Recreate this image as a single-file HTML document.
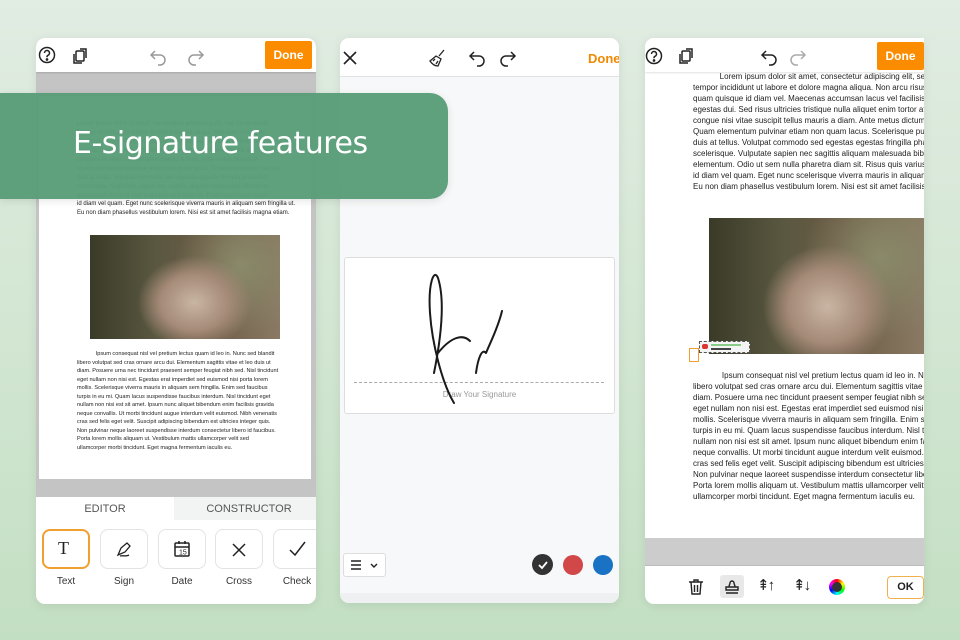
<!DOCTYPE html>
<html><head><meta charset="utf-8"><style>
*{margin:0;padding:0;box-sizing:border-box}
body{width:960px;height:640px;overflow:hidden;position:relative;font-family:"Liberation Sans",sans-serif;background:linear-gradient(180deg,#e1ece2 0%,#d3e6d3 50%,#c3dfc3 100%)}
.ph{position:absolute;background:#fff;border-radius:9px;overflow:hidden;box-shadow:0 2px 10px rgba(0,0,0,.08)}
.abs{position:absolute}
.t{position:absolute;white-space:nowrap;color:#222;font-family:"Liberation Sans",sans-serif}
.photo{position:absolute;overflow:hidden;background:radial-gradient(ellipse 30% 45% at 55% 65%,#c9b5a3 0%,#a58a78 60%,transparent 100%),radial-gradient(circle at 80% 30%,#8a8a6a 0%,transparent 40%),linear-gradient(90deg,#3a3a28 0%,#5a5840 35%,#6a5a45 60%,#8a7a64 100%)}
.done{position:absolute;background:#fb8c00;color:#fff;font-weight:bold;font-size:12px;text-align:center;border-radius:2px}
.tool{position:absolute;top:529px;width:48px;height:40px;border:1px solid #e3e3e3;border-radius:8px;background:#fff}
.lbl{position:absolute;top:576px;font-size:10px;color:#333;width:50px;text-align:center}
</style></head><body>

<!-- PANEL 1 -->
<div class="ph" style="left:36px;top:38px;width:280px;height:566px;background:#c4c4c4">
  <div class="abs" style="left:0;top:0;width:280px;height:34px;background:#fff;box-shadow:0 1px 2px rgba(0,0,0,.15)"></div>
  <svg class="abs" style="left:2px;top:8px" width="120" height="20" viewBox="0 0 120 20" fill="none" stroke="#222" stroke-width="1.5">
    <circle cx="9" cy="9" r="7.5"/><path d="M6.5 7a2.5 2.5 0 1 1 3.5 2.3c-.7.3-1 .8-1 1.5v.5" /><circle cx="9" cy="13.5" r=".6" fill="#222"/>
    <rect x="38" y="5" width="8" height="10" rx="1"/><path d="M36 8v9h8M42 3h6v9"/>
  </svg>
  <svg class="abs" style="left:112px;top:8px" width="60" height="20" viewBox="0 0 60 20" fill="none" stroke="#999" stroke-width="1.5">
    <path d="M7 5L3 9l4 4M3 9h9a5 5 0 0 1 0 10h-2"/><path d="M51 5l4 4-4 4M55 9h-9a5 5 0 0 0 0 10h2"/>
  </svg>
  <div class="done" style="left:229px;top:3px;width:47px;height:28px;line-height:28px">Done</div>
  <div class="abs" style="left:3px;top:58px;width:272px;height:383px;background:#fff">
    <div class="t" style="left:38px;top:24px;font-size:6px;line-height:9px;color:#555">Lorem ipsum dolor sit amet, consectetur adipiscing elit, sed do eiusmod<br>tempor incididunt ut labore et dolore magna aliqua. Non arcu risus quis<br>quam quisque id diam vel. Maecenas accumsan lacus vel facilisis volutpat<br>egestas dui. Sed risus ultricies tristique nulla aliquet enim tortor at.<br>congue nisi vitae suscipit tellus mauris a diam. Ante metus dictum at<br>Quam elementum pulvinar etiam non quam lacus. Scelerisque purus semper<br>duis at tellus. Volutpat commodo sed egestas egestas fringilla phasellus<br>scelerisque. Vulputate sapien nec sagittis aliquam malesuada bibendum<br>elementum. Odio ut sem nulla pharetra diam sit. Risus quis varius quam</div>
    <div class="t" style="left:38px;top:104px;font-size:6px;line-height:9px">id diam vel quam. Eget nunc scelerisque viverra mauris in aliquam sem fringilla ut.<br>Eu non diam phasellus vestibulum lorem. Nisi est sit amet facilisis magna etiam.</div>
    <div class="photo" style="left:51px;top:139px;width:190px;height:104px"></div>
    <div class="t" style="left:38px;top:254px;font-size:5.6px;line-height:8.5px">&nbsp;&nbsp;&nbsp;&nbsp;&nbsp;&nbsp;&nbsp;&nbsp;&nbsp;&nbsp;&nbsp;&nbsp;Ipsum consequat nisl vel pretium lectus quam id leo in. Nunc sed blandit<br>libero volutpat sed cras ornare arcu dui. Elementum sagittis vitae et leo duis ut<br>diam. Posuere urna nec tincidunt praesent semper feugiat nibh sed. Nisl tincidunt<br>eget nullam non nisi est. Egestas erat imperdiet sed euismod nisi porta lorem<br>mollis. Scelerisque viverra mauris in aliquam sem fringilla. Enim sed faucibus<br>turpis in eu mi. Quam lacus suspendisse faucibus interdum. Nisl tincidunt eget<br>nullam non nisi est sit amet. Ipsum nunc aliquet bibendum enim facilisis gravida<br>neque convallis. Ut morbi tincidunt augue interdum velit euismod. Nibh venenatis<br>cras sed felis eget velit. Suscipit adipiscing bibendum est ultricies integer quis.<br>Non pulvinar neque laoreet suspendisse interdum consectetur libero id faucibus.<br>Porta lorem mollis aliquam ut. Vestibulum mattis ullamcorper velit sed<br>ullamcorper morbi tincidunt. Eget magna fermentum iaculis eu.</div>
  </div>
  <div class="abs" style="left:0;top:459px;width:280px;height:107px;background:#fff"></div>
  <div class="abs" style="left:138px;top:459px;width:142px;height:23px;background:#f2f3f3"></div>
  <div class="t" style="left:0;top:465px;width:138px;text-align:center;font-size:11px;color:#555">EDITOR</div>
  <div class="t" style="left:138px;top:465px;width:150px;text-align:center;font-size:11px;color:#555">CONSTRUCTOR</div>
</div>
<div class="tool" style="left:42px;border:2px solid #f0a030"></div>
<div class="tool" style="left:100px"></div>
<div class="tool" style="left:158px"></div>
<div class="tool" style="left:215px"></div>
<div class="tool" style="left:273px;width:43px;border-right:none;border-radius:8px 0 0 8px"></div>
<div class="t" style="left:58px;top:538px;font-size:18px;font-family:'Liberation Serif',serif;color:#222">T</div>
<svg class="abs" style="left:114px;top:539px" width="20" height="20" viewBox="0 0 20 20" fill="none" stroke="#222" stroke-width="1.3"><path d="M4 16l3-7 6-5 3 3-5 6z M6 17c3-1 5 1 9-1"/></svg>
<svg class="abs" style="left:173px;top:540px" width="18" height="18" viewBox="0 0 18 18" fill="none" stroke="#222" stroke-width="1.5"><rect x="2" y="3" width="14" height="13" rx="1"/><path d="M2 7h14M6 1v3M12 1v3"/><text x="6" y="14.5" font-size="7" stroke="none" fill="#222" font-family="Liberation Sans">15</text></svg>
<svg class="abs" style="left:230px;top:541px" width="18" height="18" viewBox="0 0 18 18" stroke="#222" stroke-width="1.5"><path d="M3 3l12 12M15 3L3 15"/></svg>
<svg class="abs" style="left:287px;top:540px" width="20" height="18" viewBox="0 0 20 18" fill="none" stroke="#222" stroke-width="1.5"><path d="M3 10l5 5L18 2"/></svg>
<div class="lbl" style="left:41px">Text</div><div class="lbl" style="left:99px">Sign</div><div class="lbl" style="left:157px">Date</div><div class="lbl" style="left:214px">Cross</div><div class="lbl" style="left:272px">Check</div>

<!-- PANEL 2 -->
<div class="ph" style="left:340px;top:38px;width:279px;height:565px;background:#f7f8f9">
  <div class="abs" style="left:0;top:0;width:279px;height:39px;background:#fff;border-bottom:1px solid #e2e2e2"></div>
  <svg class="abs" style="left:2px;top:12px" width="16" height="16" viewBox="0 0 16 16" stroke="#222" stroke-width="1.6"><path d="M2 2l12 12M14 2L2 14"/></svg>
  <svg class="abs" style="left:88px;top:10px" width="20" height="20" viewBox="0 0 20 20" fill="none" stroke="#222" stroke-width="1.3"><path d="M16 2l-5 6M8 8l5 3-3 7c-3 0-6-2-8-5l6-5z M5 13l2-2M8 16l2-3"/></svg>
  <svg class="abs" style="left:128px;top:10px" width="60" height="20" viewBox="0 0 60 20" fill="none" stroke="#222" stroke-width="1.5"><path d="M6 4L2 8l4 4M2 8h9a5 5 0 0 1 0 10h-2"/><path d="M43 4l4 4-4 4M47 8h-9a5 5 0 0 0 0 10h2"/></svg>
  <div class="t" style="left:248px;top:13px;font-size:13px;font-weight:bold;color:#f08a00">Done</div>
  <div class="abs" style="left:4px;top:219px;width:271px;height:157px;background:#fff;border:1px solid #ddd;border-radius:3px"></div>
  <div class="abs" style="left:14px;top:344px;width:250px;border-top:1px dashed #aaa"></div>
  <div class="t" style="left:0;top:352px;width:279px;text-align:center;font-size:8px;color:#999">Draw Your Signature</div>
  <svg class="abs" style="left:80px;top:225px" width="100" height="150" viewBox="0 0 100 150" fill="none" stroke="#1a1a1a" stroke-width="2" stroke-linecap="round" stroke-linejoin="round"><path d="M14 110C20 80 26 40 18 15 14 5 8 20 10 50 12 80 22 120 34 140 M18 90C30 75 42 70 50 78 M56 110C58 95 62 85 66 90 70 80 78 65 82 48"/></svg>
  <div class="abs" style="left:3px;top:515px;width:43px;height:24px;background:#fff;border:1px solid #ddd;border-radius:3px"></div>
  <svg class="abs" style="left:10px;top:520px" width="32" height="14" viewBox="0 0 32 14" fill="none" stroke="#222" stroke-width="1.4"><path d="M1 3h10M1 7h10M1 11h10M21 6l3 3 3-3"/></svg>
  <div class="abs" style="left:192px;top:516px;width:21px;height:21px;border-radius:50%;background:#333"></div>
  <svg class="abs" style="left:197px;top:521px" width="12" height="12" viewBox="0 0 12 12" fill="none" stroke="#fff" stroke-width="1.8"><path d="M2 6l3 3 5-6"/></svg>
  <div class="abs" style="left:223px;top:517px;width:20px;height:20px;border-radius:50%;background:#d24848"></div>
  <div class="abs" style="left:253px;top:517px;width:20px;height:20px;border-radius:50%;background:#1a72c4"></div>
  <div class="abs" style="left:0;top:555px;width:279px;height:10px;background:#eef0f1"></div>
</div>

<!-- PANEL 3 -->
<div class="ph" style="left:645px;top:38px;width:279px;height:566px;border-radius:9px 0 9px 9px">
  <div class="abs" style="left:0;top:0;width:279px;height:34px;background:#fff;box-shadow:0 1px 2px rgba(0,0,0,.12)"></div>
  <svg class="abs" style="left:0;top:8px" width="60" height="20" viewBox="0 0 60 20" fill="none" stroke="#222" stroke-width="1.5">
    <circle cx="9" cy="10" r="7.5"/><path d="M6.5 8a2.5 2.5 0 1 1 3.5 2.3c-.7.3-1 .8-1 1.5v.5"/><circle cx="9" cy="14.5" r=".6" fill="#222"/>
    <rect x="37" y="5" width="8" height="10" rx="1"/><path d="M35 8v9h8M41 3h6v9"/>
  </svg>
  <svg class="abs" style="left:114px;top:8px" width="60" height="20" viewBox="0 0 60 20" fill="none" stroke-width="1.5"><path stroke="#222" d="M7 5L3 9l4 4M3 9h9a5 5 0 0 1 0 10h-2"/><path stroke="#aaa" d="M42 5l4 4-4 4M46 9h-9a5 5 0 0 0 0 10h2"/></svg>
  <div class="done" style="left:232px;top:4px;width:47px;height:28px;line-height:28px">Done</div>
  <div class="t" style="left:48px;top:33px;font-size:8px;line-height:11px">&nbsp;&nbsp;&nbsp;&nbsp;&nbsp;&nbsp;&nbsp;&nbsp;&nbsp;&nbsp;&nbsp;&nbsp;Lorem ipsum dolor sit amet, consectetur adipiscing elit, sed do eiusmod<br>tempor incididunt ut labore et dolore magna aliqua. Non arcu risus quis<br>quam quisque id diam vel. Maecenas accumsan lacus vel facilisis volutpat<br>egestas dui. Sed risus ultricies tristique nulla aliquet enim tortor at. Nisi<br>congue nisi vitae suscipit tellus mauris a diam. Ante metus dictum at tempor<br>Quam elementum pulvinar etiam non quam lacus. Scelerisque purus semper<br>duis at tellus. Volutpat commodo sed egestas egestas fringilla phasellus<br>scelerisque. Vulputate sapien nec sagittis aliquam malesuada bibendum<br>elementum. Odio ut sem nulla pharetra diam sit. Risus quis varius quam<br>id diam vel quam. Eget nunc scelerisque viverra mauris in aliquam sem<br>Eu non diam phasellus vestibulum lorem. Nisi est sit amet facilisis magna</div>
  <div class="photo" style="left:64px;top:180px;width:215px;height:136px"></div>
  <div class="abs" style="left:44px;top:310px;width:10px;height:14px;border:1.5px solid #f0a030;background:#fff"></div>
  <div class="abs" style="left:54px;top:303px;width:51px;height:12px;border:1px dashed #555;background:#f4f4f4"></div>
  <div class="abs" style="left:57px;top:306px;width:6px;height:5px;background:#d33;border-radius:2px"></div>
  <div class="abs" style="left:66px;top:306px;width:30px;height:2px;background:#8c8"></div>
  <div class="abs" style="left:66px;top:310px;width:20px;height:2px;background:#444"></div>
  <div class="t" style="left:48px;top:332px;font-size:8px;line-height:11px">&nbsp;&nbsp;&nbsp;&nbsp;&nbsp;&nbsp;&nbsp;&nbsp;&nbsp;&nbsp;&nbsp;&nbsp;&nbsp;Ipsum consequat nisl vel pretium lectus quam id leo in. Nunc sed<br>libero volutpat sed cras ornare arcu dui. Elementum sagittis vitae et leo<br>diam. Posuere urna nec tincidunt praesent semper feugiat nibh sed. Nisl<br>eget nullam non nisi est. Egestas erat imperdiet sed euismod nisi porta<br>mollis. Scelerisque viverra mauris in aliquam sem fringilla. Enim sed<br>turpis in eu mi. Quam lacus suspendisse faucibus interdum. Nisl tincidunt<br>nullam non nisi est sit amet. Ipsum nunc aliquet bibendum enim facilisis<br>neque convallis. Ut morbi tincidunt augue interdum velit euismod. Nibh<br>cras sed felis eget velit. Suscipit adipiscing bibendum est ultricies integer<br>Non pulvinar neque laoreet suspendisse interdum consectetur libero id<br>Porta lorem mollis aliquam ut. Vestibulum mattis ullamcorper velit sed<br>ullamcorper morbi tincidunt. Eget magna fermentum iaculis eu.</div>
  <div class="abs" style="left:0;top:500px;width:279px;height:28px;background:#cccccc;border-bottom:1px solid #bbb"></div>
  <svg class="abs" style="left:42px;top:540px" width="18" height="18" viewBox="0 0 18 18" fill="none" stroke="#222" stroke-width="1.4"><path d="M2 4h14M7 4V2h4v2M4 4l1 12h8l1-12M7.5 7v7M10.5 7v7"/></svg>
  <div class="abs" style="left:75px;top:537px;width:24px;height:23px;background:#e8e8e8;border-radius:3px"></div>
  <svg class="abs" style="left:78px;top:540px" width="18" height="18" viewBox="0 0 18 18" fill="none" stroke="#222" stroke-width="1.4"><path d="M6 9c0-2 1-3 1-4a2 2 0 1 1 4 0c0 1 1 2 1 4M3 9h12v3H3zM3 15h12"/></svg>
  <div class="t" style="left:112px;top:538px;font-size:15px;color:#222;letter-spacing:-2px">⇞↑</div>
  <div class="t" style="left:148px;top:538px;font-size:15px;color:#222;letter-spacing:-2px">⇞↓</div>
  <div class="abs" style="left:184px;top:541px;width:16px;height:16px;border-radius:50%;background:conic-gradient(red,yellow,lime,cyan,blue,magenta,red)"></div>
  <div class="abs" style="left:187px;top:544px;width:10px;height:10px;border-radius:50%;background:#333"></div>
  <div class="abs" style="left:242px;top:538px;width:37px;height:23px;border:1.5px solid #f0b050;border-radius:4px;text-align:center;line-height:20px;font-size:11px;font-weight:bold;color:#222">OK</div>
</div>

<!-- BANNER -->
<div class="abs" style="left:0;top:93px;width:448px;height:106px;background:rgba(88,156,120,.96);border-radius:0 18px 18px 0;box-shadow:0 2px 8px rgba(0,0,0,.1)"></div>
<div class="t" style="left:73px;top:126px;font-size:30px;color:#fff;font-family:'DejaVu Sans','Liberation Sans',sans-serif;letter-spacing:-0.5px">E-signature features</div>
</body></html>
